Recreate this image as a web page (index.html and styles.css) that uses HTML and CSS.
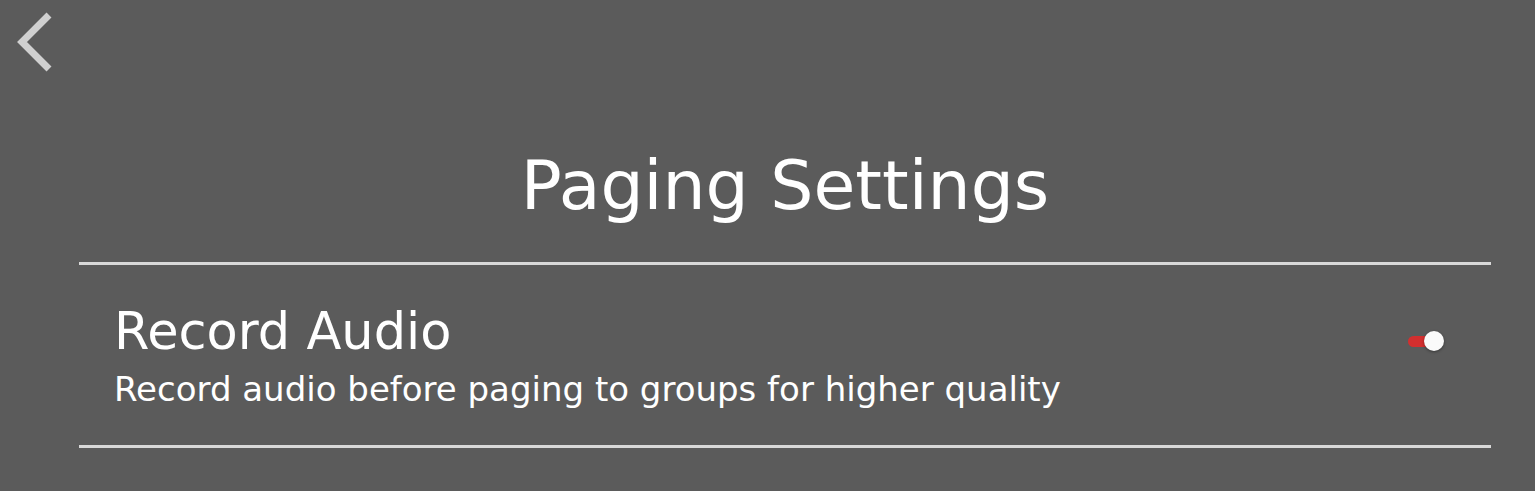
FILE: index.html
```html
<!DOCTYPE html>
<html lang="en">
<head>
    <meta charset="UTF-8">
    <meta name="viewport" content="width=device-width, initial-scale=1.0">
    <title>Paging Settings</title>
    <link rel="stylesheet" href="styles.css">
</head>
<body>
    <!-- back button -->
    <header class="top-bar">
        <button class="back-button" aria-label="Back">
            <svg width="40" height="60" viewBox="0 0 40 60">
                <polyline points="32,3 5,30 32,57" fill="none" stroke="#d0d0d0" stroke-width="7" />
            </svg>
        </button>
    </header>

    <div class="settings">
        <h1 class="settings-title">Paging Settings</h1>

        <div class="setting-row">
            <div class="setting-text">
                <p class="setting-name">Record Audio</p>
                <p class="setting-desc">Record audio before paging to groups for higher quality</p>
            </div>
            <label class="toggle">
                <input type="checkbox" checked>
                <span class="toggle-track"></span>
                <span class="toggle-knob"></span>
            </label>
        </div>
    </div>
</body>
</html>
```

FILE: styles.css
```css
body {
    margin: 0;
    background-color: #5b5b5b;
    color: #ffffff;
    font-family: "DejaVu Sans", sans-serif;
}

/* top bar with the back arrow */
.top-bar {
    height: 100px;
    padding: 12px 0 0 17px;
    box-sizing: border-box;
}

.back-button {
    background: none;
    border: none;
    padding: 0;
    cursor: pointer;
    display: block;
}

/* settings list */
.settings {
    padding: 0 44px 0 79px;
}

.settings-title {
    margin: 0;
    text-align: center;
    font-size: 68px;
    font-weight: normal;
    line-height: 1;
    padding-top: 52px;
    padding-bottom: 42px;
    border-bottom: 3px solid #d9d9d9;
}

.setting-row {
    display: flex;
    align-items: flex-start;
    justify-content: space-between;
    padding: 36px 47px 35px 35px;
    border-bottom: 3px solid #d9d9d9;
}

.setting-name {
    margin: 0;
    font-size: 51px;
    line-height: 1.2;
}

.setting-desc {
    margin: 7px 0 0;
    font-size: 34px;
    line-height: 1.2;
}

/* small switch */
.toggle {
    position: relative;
    width: 36px;
    height: 20px;
    margin-top: 30px;
    cursor: pointer;
}

.toggle input {
    display: none;
}

.toggle-track {
    position: absolute;
    left: 0;
    top: 5px;
    width: 30px;
    height: 11px;
    border-radius: 6px;
    background-color: #d32f2f;
}

.toggle-knob {
    position: absolute;
    right: 0;
    top: 0;
    width: 20px;
    height: 20px;
    border-radius: 50%;
    background-color: #fafafa;
    box-shadow: 0 1px 3px rgba(0, 0, 0, 0.4);
}
```
